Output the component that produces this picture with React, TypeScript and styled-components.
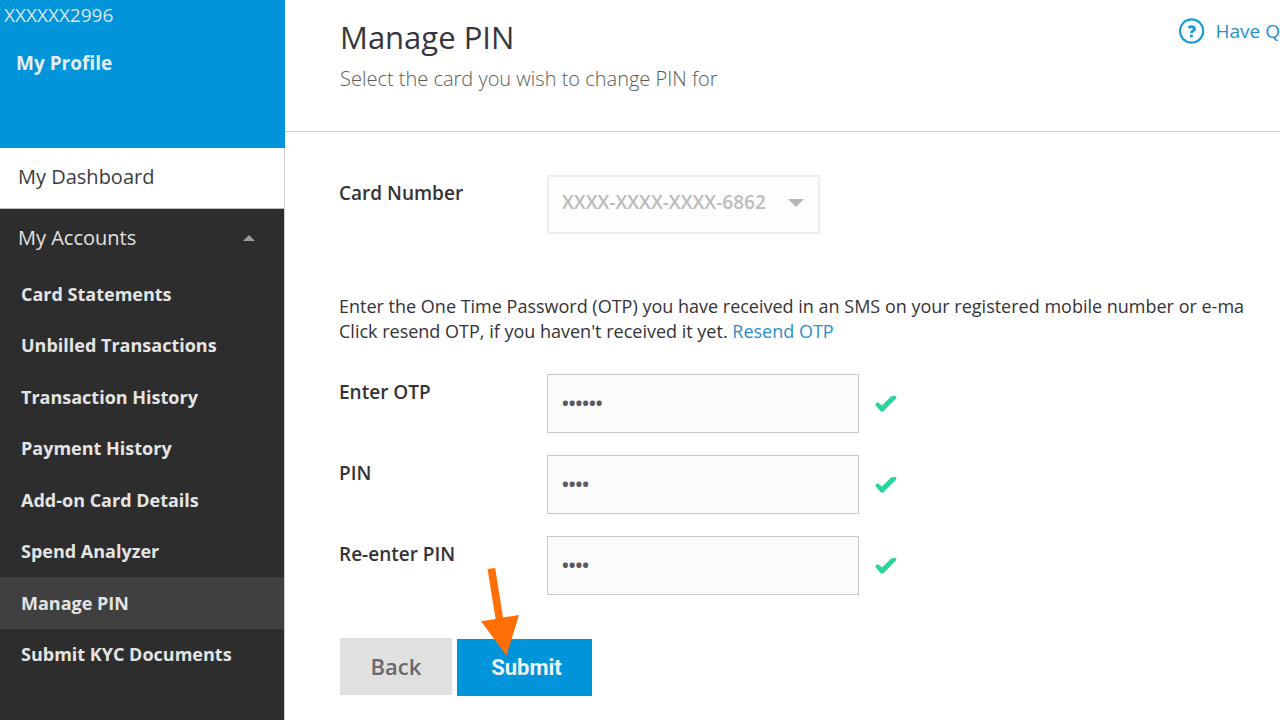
import React, { useState } from 'react';
import styled, { createGlobalStyle } from 'styled-components';

const GlobalStyle = createGlobalStyle`
  *, *::before, *::after { box-sizing: border-box; }
  body {
    margin: 0;
    background: #ffffff;
    color: #333338;
    font-family: 'Open Sans', 'Noto Sans', sans-serif;
    font-size: 18px;
    overflow: hidden;
  }
  button, input, select { font-family: inherit; border-radius: 0; }
  a { text-decoration: none; }
`;

const Page = styled.div`
  display: grid;
  grid-template-columns: 285px minmax(0, 1fr);
  min-height: 100vh;
`;

const Sidebar = styled.aside`
  display: flex;
  flex-direction: column;
`;

const Profile = styled.div`
  display: flex;
  flex-direction: column;
  gap: 24px;
  height: 148px;
  padding: 3px 4px;
  background: #0095da;
  line-height: 24px;
`;

const AccountId = styled.span`
  color: #d9e6ee;
  font-size: 19px;
`;

const ProfileLink = styled.a`
  padding-left: 12px;
  color: #e6eef3;
  font-size: 19px;
  font-weight: 700;
`;

const Nav = styled.nav`
  flex: 1;
  display: flex;
  flex-direction: column;
  border-right: 1px solid #cfcfcf;
  background: #2d2d2d;
`;

const DashboardLink = styled.a`
  height: 61px;
  padding: 0 18px;
  border-bottom: 1px solid #bcbcbc;
  background: #ffffff;
  color: #3c3c3c;
  font-size: 20px;
  line-height: 58px;
`;

const GroupToggle = styled.button`
  display: flex;
  align-items: center;
  justify-content: space-between;
  height: 59px;
  padding: 0 29px 2px 18px;
  border: 0;
  background: none;
  color: #e2e2e2;
  font-size: 20px;
`;

const MenuList = styled.ul`
  display: grid;
  grid-auto-rows: 1fr;
  height: 412px;
  margin: 0;
  padding: 0;
  list-style: none;
`;

const MenuItem = styled.li<{ $active: boolean }>`
  display: flex;
  background: ${({ $active }) => ($active ? '#404040' : 'transparent')};
`;

const MenuLink = styled.a`
  flex: 1;
  display: flex;
  align-items: center;
  padding: 0 21px;
  color: #e4e4e4;
  font-weight: 700;
`;

const Main = styled.main`
  min-width: 0;
  overflow: hidden;
`;

const Header = styled.header`
  display: flex;
  justify-content: space-between;
  height: 132px;
  padding: 18px 0 0 55px;
  border-bottom: 1px solid #d6d6d6;
`;

const Title = styled.h1`
  margin: 0;
  color: #36363c;
  font-size: 31px;
  font-weight: 400;
  line-height: 38px;
`;

const Subtitle = styled.p`
  margin: 9px 0 0;
  color: #5a5a5a;
  font-size: 20px;
  font-weight: 300;
  line-height: 28px;
`;

const HelpLink = styled.a`
  display: flex;
  align-items: center;
  gap: 11px;
  height: 26px;
  color: #2a8fcb;
  font-size: 19px;
  white-space: nowrap;
`;

const Form = styled.form`
  padding: 43px 0 24px 54px;
`;

const Field = styled.div`
  display: grid;
  grid-template-columns: 208px auto 24px;
  justify-content: start;
  min-height: 59px;
  margin-bottom: 22px;
`;

const Label = styled.label`
  padding-top: 6px;
  font-size: 19px;
  font-weight: 600;
  line-height: 24px;
`;

const SelectBox = styled.div`
  display: grid;
  align-items: center;
  width: 273px;
  height: 59px;
  border: 2px solid #ededeb;
  background: #fdfdfc;
`;

const CardSelect = styled.select`
  grid-area: 1 / 1;
  appearance: none;
  height: 55px;
  padding: 0 40px 6px 13px;
  border: 0;
  background: transparent;
  color: #bcbcbc;
  font-size: 19px;
  font-weight: 600;
  opacity: 1;
`;

const SelectArrow = styled.svg`
  grid-area: 1 / 1;
  justify-self: end;
  margin: 0 14px 3px 0;
  pointer-events: none;
`;

const Notice = styled.p`
  margin: 60px 0 30px;
  line-height: 25px;
  white-space: nowrap;
`;

const ResendLink = styled.a`
  color: #2a8fcb;
`;

const SecretInput = styled.input`
  width: 312px;
  height: 59px;
  padding: 0 14px 2px;
  border: 1px solid #c8c8c8;
  background: #fbfbfb;
  color: #5a5a60;
  font-size: 18px;
  font-weight: 700;
  outline: 0;
`;

const Tick = styled.svg`
  align-self: center;
  margin-left: 15px;
`;

const Actions = styled.div`
  display: flex;
  gap: 5px;
  margin-top: 43px;
  padding-left: 1px;
`;

const Button = styled.button`
  height: 57px;
  border: 0;
  font-size: 22px;
`;

const BackButton = styled(Button)`
  width: 112px;
  padding-bottom: 3px;
  background: #e0e0e0;
  color: #68686c;
  font-weight: 600;
`;

const SubmitSlot = styled.div`
  position: relative;
  padding-top: 1px;
`;

const SubmitButton = styled(Button)`
  width: 135px;
  padding-left: 10px;
  background: #0095da;
  color: #eef4f8;
  font-family: Roboto, 'Liberation Sans', sans-serif;
  font-weight: 700;
`;

const Pointer = styled.svg`
  position: absolute;
  left: 24px;
  bottom: 39px;
  pointer-events: none;
`;

const MENU = [
  'Card Statements',
  'Unbilled Transactions',
  'Transaction History',
  'Payment History',
  'Add-on Card Details',
  'Spend Analyzer',
  'Manage PIN',
  'Submit KYC Documents',
];

const SECRETS = [
  { id: 'otp', label: 'Enter OTP', initial: '482913' },
  { id: 'pin', label: 'PIN', initial: '1234' },
  { id: 'pin-again', label: 'Re-enter PIN', initial: '1234' },
];

function SecretField({ id, label, initial }: { id: string; label: string; initial: string }) {
  const [value, setValue] = useState(initial);
  return (
    <Field>
      <Label htmlFor={id}>{label}</Label>
      <SecretInput
        id={id}
        type="password"
        autoComplete="off"
        value={value}
        onChange={(e) => setValue(e.target.value)}
      />
      <Tick width="24" height="18" viewBox="0 0 24 18" aria-hidden="true">
        <path d="M1 9.5 L3.6 7 L8 10.4 L17 1.6 Q18 1 20 1 L22.4 1.2 L22 3.6 L9.6 16 Q8 17.2 6.4 16 Z" fill="#27d796" />
      </Tick>
    </Field>
  );
}

export default function App() {
  return (
    <>
      <GlobalStyle />
      <Page>
        <Sidebar>
          <Profile>
            <AccountId>XXXXXX2996</AccountId>
            <ProfileLink href="#profile">My Profile</ProfileLink>
          </Profile>
          <Nav>
            <DashboardLink href="#dashboard">My Dashboard</DashboardLink>
            <GroupToggle type="button" aria-expanded="true">
              My Accounts
              <svg width="12" height="6" viewBox="0 0 12 6" aria-hidden="true">
                <path d="M6 0 L12 6 H0 Z" fill="#a39ba3" />
              </svg>
            </GroupToggle>
            <MenuList>
              {MENU.map((name) => (
                <MenuItem key={name} $active={name === 'Manage PIN'}>
                  <MenuLink href="#menu">{name}</MenuLink>
                </MenuItem>
              ))}
            </MenuList>
          </Nav>
        </Sidebar>

        <Main>
          <Header>
            <div>
              <Title>Manage PIN</Title>
              <Subtitle>Select the card you wish to change PIN for</Subtitle>
            </div>
            <HelpLink href="#help">
              <svg width="26" height="26" viewBox="0 0 26 26" fill="none" stroke="#1c9cdc" aria-hidden="true">
                <circle cx="12.6" cy="13" r="11.6" strokeWidth="2.2" />
                <path d="M9.4 9.8 Q12.6 7.8 14.8 9.2 Q16.6 11.2 14 12.8 Q12.4 13.6 12.4 15.2" strokeWidth="2.8" />
                <path d="M11 18 H13.8" strokeWidth="2.6" />
              </svg>
              Have Q
            </HelpLink>
          </Header>

          <Form onSubmit={(e) => e.preventDefault()}>
            <Field>
              <Label htmlFor="card">Card Number</Label>
              <SelectBox>
                <CardSelect id="card" disabled>
                  <option>XXXX-XXXX-XXXX-6862</option>
                </CardSelect>
                <SelectArrow width="16" height="8" viewBox="0 0 16 8" aria-hidden="true">
                  <path d="M0 0 H16 L8 8 Z" fill="#b5b5b5" />
                </SelectArrow>
              </SelectBox>
            </Field>

            <Notice>
              Enter the One Time Password (OTP) you have received in an SMS on your registered mobile number or e-ma
              <br />
              Click resend OTP, if you haven't received it yet. <ResendLink href="#resend">Resend OTP</ResendLink>
            </Notice>

            {SECRETS.map((s) => (
              <SecretField key={s.id} {...s} />
            ))}

            <Actions>
              <BackButton type="button">Back</BackButton>
              <SubmitSlot>
                <SubmitButton type="submit">Submit</SubmitButton>
                <Pointer width="40" height="90" viewBox="0 0 40 90" aria-hidden="true">
                  <path d="M6.5 2 L14.2 1 L22 50.4 L38 48 L25.4 88.6 L0 54.2 L14.6 52 Z" fill="#ff6f05" />
                </Pointer>
              </SubmitSlot>
            </Actions>
          </Form>
        </Main>
      </Page>
    </>
  );
}
